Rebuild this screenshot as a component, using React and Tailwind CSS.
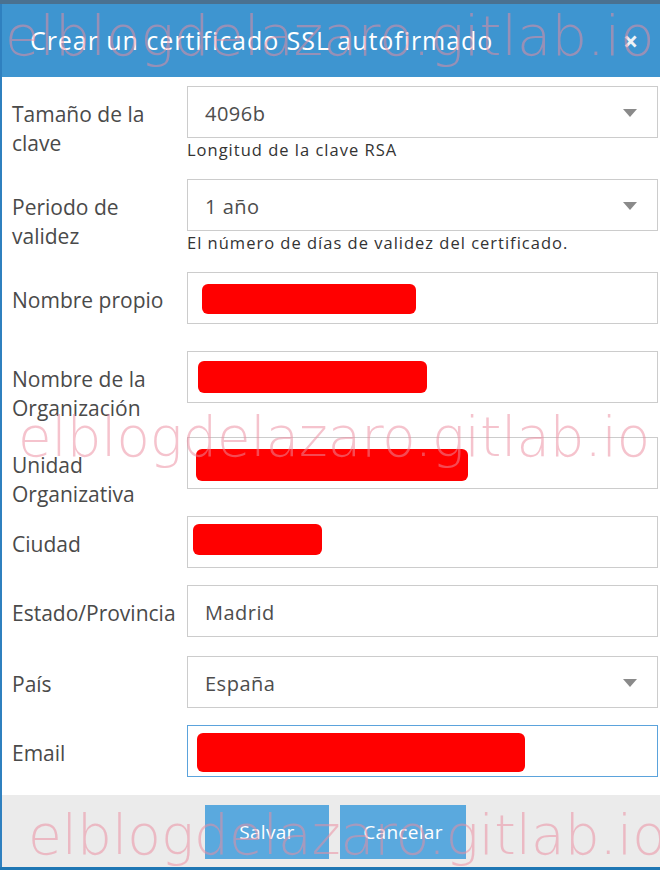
import React from 'react';

const fields = [
  { label: ['Tamaño de la', 'clave'], kind: 'select', value: '4096b', help: 'Longitud de la clave RSA', mt: 'mt-0' },
  { label: ['Periodo de', 'validez'], kind: 'select', value: '1 año', help: 'El número de días de validez del certificado.', mt: 'mt-[19px]' },
  { label: ['Nombre propio'], kind: 'redacted', red: 'ml-[14px] mt-[11px] w-[214px] h-[30px]', mt: 'mt-[19px]' },
  { label: ['Nombre de la', 'Organización'], kind: 'redacted', red: 'ml-[10px] mt-[9px] w-[229px] h-[32px]', mt: 'mt-[27px]' },
  { label: ['Unidad', 'Organizativa'], kind: 'redacted', red: 'ml-[8px] mt-[11px] w-[272px] h-[32px]', mt: 'mt-[34px]' },
  { label: ['Ciudad'], kind: 'redacted', red: 'ml-[5px] mt-[7px] w-[129px] h-[31px]', mt: 'mt-[27px]' },
  { label: ['Estado/Provincia'], kind: 'text', value: 'Madrid', mt: 'mt-[17px]' },
  { label: ['País'], kind: 'select', value: 'España', mt: 'mt-[19px]' },
  { label: ['Email'], kind: 'redacted', red: 'ml-[9px] mt-[7px] w-[328px] h-[39px]', focus: true, mt: 'mt-[17px]' },
];

function Caret() {
  return (
    <svg className="absolute right-[20px] top-[22px]" width="14" height="8" viewBox="0 0 14 8">
      <path d="M0 0 H14 L7 8 Z" fill="#8a8a8a" />
    </svg>
  );
}

function Field({ f }) {
  const box = f.focus ? 'border-[#5ba3dc]' : 'border-[#cccccc]';
  return (
    <div className={`flex items-start ${f.mt}`}>
      {/* label keeps the row as tall as the input; second line may overflow */}
      <div className="w-[185px] h-[52px] pl-[10px] pt-[14px] text-[21px] leading-[29px] text-[#4a4a4a] overflow-visible">
        {f.label.map((l) => (
          <div key={l} className="whitespace-nowrap">{l}</div>
        ))}
      </div>
      <div className="w-[471px]">
        {f.kind === 'redacted' ? (
          <div className={`h-[52px] border ${box} bg-white flex items-start`}>
            <div className={`rounded-[6px] bg-[#ff0000] ${f.red}`} />
          </div>
        ) : (
          <div className={`relative h-[52px] border ${box} bg-white flex items-center pl-[17px] pt-[4px] text-[20px] tracking-[0.5px] text-[#4d4d4d]`}>
            {f.value}
            {f.kind === 'select' && <Caret />}
          </div>
        )}
        {f.help && (
          <div className="text-[16.5px] leading-[21px] pt-[1px] tracking-[1px] text-[#333]">{f.help}</div>
        )}
      </div>
    </div>
  );
}

function Watermark({ pos, size }) {
  return (
    <div
      className={`pointer-events-none absolute whitespace-nowrap font-['DejaVu_Sans',sans-serif] font-extralight leading-none text-[rgba(235,140,160,0.52)] ${size} ${pos}`}
    >
      elblogdelazaro.gitlab.io
    </div>
  );
}

export default function App() {
  return (
    <div className="relative w-[660px] h-[870px] overflow-hidden bg-white font-['Open_Sans',sans-serif]">
      <div className="h-[4px] bg-[#4a7190]" />
      <div className="flex flex-col h-[863px] border-l-2 border-[#2f80bf]">
        {/* Header */}
        <div className="h-[73px] bg-[#3e95d0] flex items-center justify-between pl-[28px] pr-[22px]">
          <h1 className="text-[25px] text-white tracking-[0.95px]">Crear un certificado SSL autofirmado</h1>
          <span className="text-[26px] leading-none font-bold text-[#eef3f7]">×</span>
        </div>

        {/* Form */}
        <div className="flex-1 bg-white pt-[9px]">
          {fields.map((f) => (
            <Field key={f.label.join(' ')} f={f} />
          ))}
        </div>

        {/* Footer */}
        <div className="h-[72px] bg-[#ebebeb] flex items-start gap-[11px] pl-[203px] pt-[10px]">
          <button className="w-[124px] h-[54px] bg-[#5aa9de] text-white text-[19px] tracking-[0.3px]">Salvar</button>
          <button className="w-[126px] h-[54px] bg-[#5aa9de] text-white text-[19px] tracking-[0.3px]">Cancelar</button>
        </div>
      </div>
      <div className="h-[3px] bg-[#1f77b4]" />

      <Watermark pos="left-[5px] top-[8px]" size="text-[56px]" />
      <Watermark pos="left-[18px] top-[410px]" size="text-[54.5px]" />
      <Watermark pos="left-[28px] top-[808px]" size="text-[55px]" />
    </div>
  );
}
